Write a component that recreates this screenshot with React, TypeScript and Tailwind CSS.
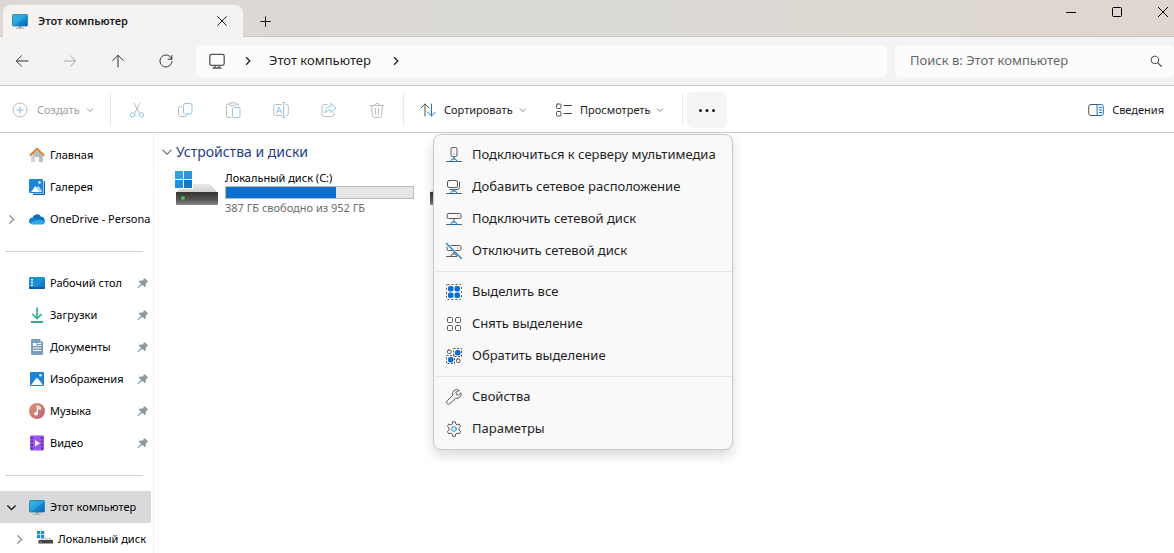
import React, { useState } from 'react';
import type { ReactNode } from 'react';

interface IconProps {
  className?: string;
}

interface NavEntry {
  id: string;
  label: string;
  icon: ReactNode;
  pinned?: boolean;
  expand?: 'open' | 'closed';
  selected?: boolean;
  nested?: boolean;
}

interface MenuEntry {
  label: string;
  icon: ReactNode;
}

function Stroke({ children, className = 'size-4' }: IconProps & { children: ReactNode }) {
  return (
    <svg
      viewBox="0 0 16 16"
      fill="none"
      stroke="currentColor"
      strokeLinecap="round"
      strokeLinejoin="round"
      className={`shrink-0 ${className}`}
      aria-hidden="true"
    >
      {children}
    </svg>
  );
}

function Chevron({ className }: IconProps) {
  return (
    <svg viewBox="0 0 8 8" fill="none" stroke="currentColor" className={`shrink-0 ${className}`} aria-hidden="true">
      <path d="M1 2.5l3 3 3-3" />
    </svg>
  );
}

function MonitorIcon() {
  return (
    <svg viewBox="0 0 16 16" className="size-4 shrink-0" aria-hidden="true">
      <defs>
        <linearGradient id="screen" x1="0" y1="0" x2="1" y2="1">
          <stop offset="0" stopColor="#37b6e0" />
          <stop offset="0.5" stopColor="#2ba3dc" />
          <stop offset="0.55" stopColor="#188fd4" />
          <stop offset="1" stopColor="#0a5cb8" />
        </linearGradient>
      </defs>
      <path d="M6.5 13h3v2h-3z" fill="#9aa7ad" />
      <path d="M4 14.7h8v1.1H4z" fill="#a9b2b7" />
      <rect x="0.5" y="1.5" width="15" height="11.5" rx="0.8" fill="url(#screen)" stroke="#1a7fa6" strokeWidth="0.8" />
    </svg>
  );
}

function HomeIcon() {
  return (
    <svg viewBox="0 0 16 16" className="size-4 shrink-0" aria-hidden="true">
      <path d="M2 7.5L8 2l6 5.5V15h-4v-5H6v5H2z" fill="#bdbdbd" />
      <path d="M2 8v7h4v-5l-2-3z" fill="#d2d2d2" />
      <path d="M0.8 8.6L8 1.6l7.2 7" fill="none" stroke="#db842e" strokeWidth="2" strokeLinejoin="round" />
    </svg>
  );
}

function GalleryIcon() {
  return (
    <svg viewBox="0 0 16 16" className="size-4 shrink-0" aria-hidden="true">
      <path d="M4 2h11a1 1 0 0 1 1 1v12a1 1 0 0 1-1 1H4z" fill="#0a5fb5" />
      <path d="M14.4 1.5v12.8H3" stroke="#e8f3fc" strokeWidth="0.8" fill="none" />
      <rect width="14" height="14" rx="1" fill="#1e86d8" />
      <path d="M2 13l4.5-6L11 13z" fill="#fff" />
      <path d="M8 8.5l1.5-1.5L13 12v1h-2z" fill="#b9dcf5" />
      <circle cx="10.5" cy="3.5" r="1.2" fill="#fff" />
    </svg>
  );
}

function CloudIcon() {
  return (
    <svg viewBox="0 0 16 16" className="size-4 shrink-0" aria-hidden="true">
      <path d="M3.5 7A4.6 4.6 0 0 1 12 5.7a3.9 3.9 0 0 1 3.8 4.3L8 12z" fill="#0f6cc4" />
      <path d="M3.6 6.4A3.6 3.6 0 0 0 1 12.5l8-3.5z" fill="#1482d6" />
      <path d="M1 12.4L9.5 8.5 16 10a2.8 2.8 0 0 1-2.8 3.5H3.6A3.6 3.6 0 0 1 1 12.4z" fill="#30a8e8" />
    </svg>
  );
}

function DesktopIcon() {
  return (
    <svg viewBox="0 0 16 16" className="size-4 shrink-0" aria-hidden="true">
      <rect y="2" width="16" height="12" rx="1" fill="#1b8fd6" />
      <path d="M0 12h16v1a1 1 0 0 1-1 1H1a1 1 0 0 1-1-1z" fill="#0d5ea8" />
      <path d="M2 4h2v1.5H2zM2 6.7h2v1.5H2zM2 9.4h2v1.5H2z" fill="#e5f5ff" />
      <path d="M16 4v8H8z" fill="#147dc8" />
    </svg>
  );
}

function DownloadIcon() {
  return (
    <svg viewBox="0 0 16 16" fill="none" stroke="#2fb58c" strokeWidth="1.7" className="size-4 shrink-0" aria-hidden="true">
      <path d="M8 0.5v10.8M3.3 7L8 11.6 12.7 7" />
      <path d="M2 15h12" stroke="#159c78" />
    </svg>
  );
}

function DocumentIcon() {
  return (
    <svg viewBox="0 0 16 16" className="size-4 shrink-0" aria-hidden="true">
      <path d="M2 1a1 1 0 0 1 1-1h8l3 3v12a1 1 0 0 1-1 1H3a1 1 0 0 1-1-1z" fill="#7c9ebd" />
      <path d="M11 0l3 3h-3z" fill="#c6d6e4" />
      <path d="M4 4h3.5v3H4z" fill="#fff" />
      <path d="M8.5 4.5H12M8.5 6.5H12M4 9h8M4 11.5h8" stroke="#fff" />
    </svg>
  );
}

function PicturesIcon() {
  return (
    <svg viewBox="0 0 16 16" className="size-4 shrink-0" aria-hidden="true">
      <rect x="1" y="1" width="14" height="14" rx="1" fill="#1b84d6" />
      <path d="M2 14l5-6.5c.6-.7 1.4-.7 2 0L14 14z" fill="#fff" />
      <circle cx="11.5" cy="4.2" r="1.2" fill="#fff" />
    </svg>
  );
}

function MusicIcon() {
  return (
    <svg viewBox="0 0 16 16" className="size-4 shrink-0" aria-hidden="true">
      <defs>
        <linearGradient id="music" x1="0" y1="0" x2="1" y2="1">
          <stop offset="0" stopColor="#e09468" />
          <stop offset="1" stopColor="#b9627e" />
        </linearGradient>
      </defs>
      <circle cx="8" cy="8" r="8" fill="url(#music)" />
      <ellipse cx="7" cy="10.8" rx="2" ry="1.7" fill="#fff" />
      <path d="M8.3 11V3.2l2.8 1v1.9L9.3 5.4" stroke="#fff" fill="none" strokeWidth="1.3" />
    </svg>
  );
}

function VideoIcon() {
  return (
    <svg viewBox="0 0 16 16" className="size-4 shrink-0" aria-hidden="true">
      <rect x="1" y="0.5" width="14" height="15" rx="1" fill="#9a55ea" />
      <path d="M3 2v12.5M13 2v12.5" stroke="#4f229b" strokeWidth="1.6" strokeDasharray="1.7 1.8" />
      <path d="M6 5v6.4l5.2-3.2z" fill="#f4ecfd" />
    </svg>
  );
}

function SmallDriveIcon() {
  return (
    <svg viewBox="0 0 16 16" className="size-4 shrink-0" aria-hidden="true">
      <path d="M4 6.5h9.5l2 3H3z" fill="#d9d9d9" />
      <path d="M1.5 9H16v3.5H1.5z" fill="#454545" />
      <path d="M3 11h1.4" stroke="#3cd45a" />
      <path d="M0 0h3.2v3.2H0zM4 0h3.2v3.2H4zM0 4h3.2v3.2H0zM4 4h3.2v3.2H4z" fill="#1f8ad4" />
    </svg>
  );
}

function DriveIcon({ system }: { system?: boolean }) {
  return (
    <svg viewBox="0 0 44 36" className="h-9 w-11 shrink-0" aria-hidden="true">
      <defs>
        <linearGradient id="drive-top" x1="0" y1="0" x2="0" y2="1">
          <stop offset="0" stopColor="#e9e9e9" />
          <stop offset="1" stopColor="#cfcfcf" />
        </linearGradient>
        <linearGradient id="drive-front" x1="0" y1="0" x2="0" y2="1">
          <stop offset="0" stopColor="#343434" />
          <stop offset="0.6" stopColor="#555" />
          <stop offset="1" stopColor="#888" />
        </linearGradient>
      </defs>
      <path d="M8 15h27l8 9H1z" fill="url(#drive-top)" />
      <path d="M1 23h42v12a1 1 0 0 1-1 1H2a1 1 0 0 1-1-1z" fill="url(#drive-front)" />
      <path d="M14 26h26" stroke="#1c1c1c" strokeDasharray="1 7" />
      <circle cx="8" cy="29" r="2" fill="#3cc24a" />
      {system && (
        <>
          <path d="M0 1h18v19H0z" fill="#fff" />
          <path d="M0 2h8v8H0z" fill="#2ea3e0" />
          <path d="M9 2h8v8H9z" fill="#2597da" />
          <path d="M0 11h8v8H0z" fill="#218fd8" />
          <path d="M9 11h8v8H9z" fill="#1479c9" />
        </>
      )}
    </svg>
  );
}

function PinIcon() {
  return (
    <svg viewBox="0 0 12 12" className="size-3 shrink-0 text-[#8e9aa1]" aria-hidden="true">
      <path d="M7.2 0.8l4 4-1.3.7-1.2 1.4.1 2.4-1 .9-2.5-2.5L1 11.2l-.6-.6L4 7 1.7 4.6l1-1 2.5.1 1.4-1.4z" fill="currentColor" />
    </svg>
  );
}

const toolbarActions: { label: string; icon: ReactNode }[] = [
  {
    label: 'Вырезать',
    icon: (
      <Stroke>
        <path d="M5 1l5.2 10M11 1L5.8 11" stroke="#bcbcbc" />
        <circle cx="3.6" cy="12.8" r="2.2" stroke="#8fc8ea" />
        <circle cx="12.4" cy="12.8" r="2.2" stroke="#8fc8ea" />
      </Stroke>
    )
  },
  {
    label: 'Копировать',
    icon: (
      <Stroke>
        <path d="M4.5 4.5H3.5a2 2 0 0 0-2 2v6a2 2 0 0 0 2 2H8a2 2 0 0 0 2-1.8" stroke="#bcbcbc" />
        <rect x="6.5" y="1.5" width="8.5" height="10.5" rx="1.8" stroke="#8fc8ea" />
      </Stroke>
    )
  },
  {
    label: 'Вставить',
    icon: (
      <Stroke>
        <path d="M6 15.5H3A1.5 1.5 0 0 1 1.5 14V3.5A1.5 1.5 0 0 1 3 2h1.500M11 2h1a1.500 1.500 0 0 1 1.500 1.500" stroke="#bcbcbc" />
        <rect x="4.5" y="0.8" width="6.5" height="2.7" rx="1.2" stroke="#bcbcbc" />
        <rect x="7.5" y="5.5" width="7.5" height="10" rx="1" stroke="#8fc8ea" />
      </Stroke>
    )
  },
  {
    label: 'Переименовать',
    icon: (
      <Stroke>
        <path
          d="M8.5 13.5H2.7a2 2 0 0 1-2-2v-7a2 2 0 0 1 2-2h5.8M13 2.5h.3a2 2 0 0 1 2 2v7a2 2 0 0 1-2 2H13"
          stroke="#bcbcbc"
        />
        <path d="M3.5 11L6 5l2.5 6M4.3 9.2h3.4M9.5.5h2.500M9.500 15.500H12M10.700.5v15" stroke="#8fc8ea" />
      </Stroke>
    )
  },
  {
    label: 'Поделиться',
    icon: (
      <Stroke>
        <path d="M6 2.5H3.5A2.5 2.5 0 0 0 1 5v7a2.5 2.5 0 0 0 2.5 2.5h7A2.5 2.5 0 0 0 13 12v-1" stroke="#bcbcbc" />
        <path d="M10 1.5L15 6l-5 4.5V8C7.5 8 5.5 9 4 11c.2-3.500 2.200-6.600 6-7z" stroke="#8fc8ea" />
      </Stroke>
    )
  },
  {
    label: 'Удалить',
    icon: (
      <Stroke>
        <path
          d="M1 3.5h14M2.5 3.5l1 10.3a1.8 1.8 0 0 0 1.8 1.7h5.4a1.8 1.8 0 0 0 1.8-1.7l1-10.3M5.8 3.5a2.2 2.2 0 0 1 4.4 0M6.5 6.5v5.500M9.500 6.500V12"
          stroke="#bcbcbc"
        />
      </Stroke>
    )
  }
];

const navGroups: NavEntry[][] = [
  [
    { id: 'home', label: 'Главная', icon: <HomeIcon /> },
    { id: 'gallery', label: 'Галерея', icon: <GalleryIcon /> },
    { id: 'onedrive', label: 'OneDrive - Persona', icon: <CloudIcon />, expand: 'closed' }
  ],
  [
    { id: 'desktop', label: 'Рабочий стол', icon: <DesktopIcon />, pinned: true },
    { id: 'downloads', label: 'Загрузки', icon: <DownloadIcon />, pinned: true },
    { id: 'documents', label: 'Документы', icon: <DocumentIcon />, pinned: true },
    { id: 'pictures', label: 'Изображения', icon: <PicturesIcon />, pinned: true },
    { id: 'music', label: 'Музыка', icon: <MusicIcon />, pinned: true },
    { id: 'video', label: 'Видео', icon: <VideoIcon />, pinned: true }
  ],
  [
    { id: 'computer', label: 'Этот компьютер', icon: <MonitorIcon />, expand: 'open', selected: true },
    { id: 'drive-c', label: 'Локальный диск', icon: <SmallDriveIcon />, expand: 'closed', nested: true }
  ]
];

const menuGroups: MenuEntry[][] = [
  [
    {
      label: 'Подключиться к серверу мультимедиа',
      icon: (
        <Stroke>
          <rect x="5" y="0.5" width="6" height="9" rx="1.5" />
          <path d="M8 9.500V12M8 7v.2M.5 14.500h4M11.500 14.500h4" />
          <path d="M6.5 12h3l1.500 2.500H5z" stroke="#0078d4" />
        </Stroke>
      )
    },
    {
      label: 'Добавить сетевое расположение',
      icon: (
        <Stroke>
          <rect x="1.5" y="1.5" width="10" height="7" rx="1.5" />
          <path d="M13.5 3v5a2.500 2.500 0 0 1-2.500 2.500H4M8 10.500V12M.5 14.500h4M11.500 14.500h4" />
          <path d="M6.5 12h3l1.500 2.500H5z" stroke="#0078d4" />
        </Stroke>
      )
    },
    {
      label: 'Подключить сетевой диск',
      icon: (
        <Stroke>
          <rect x="1" y="2.5" width="14" height="5" rx="1.5" />
          <path d="M12 4.900v.2M8 7.500V11M.5 13.500h4M11.500 13.500h4" />
          <path d="M6.5 11h3l1.500 2.500H5z" stroke="#0078d4" />
        </Stroke>
      )
    },
    {
      label: 'Отключить сетевой диск',
      icon: (
        <Stroke>
          <path d="M5 2.5h8.500A1.500 1.500 0 0 1 15 4v2a1.500 1.500 0 0 1-1.500 1.500H10M6 7.500H2.500A1.500 1.500 0 0 1 1 6V4" />
          <path d="M12 4.900v.2M8 9.500V11M.5 13.500h4M6.500 11h3l1.500 2.500H5z" />
          <path d="M0.5 0.5l15 15" stroke="#0078d4" strokeWidth="1.2" />
        </Stroke>
      )
    }
  ],
  [
    {
      label: 'Выделить все',
      icon: (
        <Stroke>
          <rect x="0.5" y="0.5" width="15" height="15" rx="1" strokeDasharray="2 2" strokeLinecap="butt" />
          <g fill="#0f6fcf" stroke="none">
            <rect x="2" y="2" width="5.5" height="5.5" rx="1.8" />
            <rect x="8.5" y="2" width="5.5" height="5.5" rx="1.8" />
            <rect x="2" y="8.5" width="5.5" height="5.5" rx="1.8" />
            <rect x="8.5" y="8.5" width="5.5" height="5.5" rx="1.8" />
          </g>
        </Stroke>
      )
    },
    {
      label: 'Снять выделение',
      icon: (
        <Stroke>
          <rect x="1.5" y="1.5" width="5" height="5" rx="1" />
          <rect x="9.5" y="1.5" width="5" height="5" rx="1" />
          <rect x="1.5" y="9.5" width="5" height="5" rx="1" />
          <rect x="9.5" y="9.5" width="5" height="5" rx="1" />
        </Stroke>
      )
    },
    {
      label: 'Обратить выделение',
      icon: (
        <Stroke>
          <rect x="1.5" y="2" width="3.5" height="3.5" rx="1" />
          <rect x="10.5" y="11" width="3.5" height="3.5" rx="1" />
          <path d="M7.5 0.5h8v8h-8zM0.5 7.5h8v8h-8z" strokeDasharray="2 1.5" strokeLinecap="butt" />
          <rect x="9" y="2" width="5.5" height="5.5" rx="2" fill="#0f6fcf" stroke="none" />
          <rect x="2" y="9" width="5.5" height="5.5" rx="2" fill="#0f6fcf" stroke="none" />
        </Stroke>
      )
    }
  ],
  [
    {
      label: 'Свойства',
      icon: (
        <Stroke>
          <path d="M13 1.2a4.2 4.2 0 0 0-6.2 5L1.2 11.7a1.9 1.9 0 0 0 2.8 2.9l5.700-5.500a4.200 4.200 0 0 0 5.300-5.400l-2.500 2.400-2-.5-.5-2z" />
        </Stroke>
      )
    },
    {
      label: 'Параметры',
      icon: (
        <Stroke>
          <path d="M6.7.8h2.600l.5 2.200 1.300.8 2.200-.7 1.300 2.300-1.600 1.600v1.900l1.600 1.600-1.300 2.300-2.200-.7-1.300.8-.5 2.300H6.700l-.5-2.300-1.300-.8-2.200.7-1.300-2.300L3 8.900V7L1.400 5.400l1.300-2.300 2.200.7L6.200 3z" />
          <circle cx="8" cy="8" r="2.3" stroke="#1d8fe0" />
        </Stroke>
      )
    }
  ]
];

function TitleBar() {
  return (
    <header className="flex h-[37px] items-end justify-between border-b border-[#c9c8c4] bg-linear-to-r from-[#ddd8d3] via-[#dbdad6] to-[#dfd7cf] pl-[3px]">
      <div className="-mb-px flex items-center">
        <div className="flex h-8 w-60 items-center rounded-t-lg bg-[#f4f3f2] pr-[11px] pl-[9px]">
          <MonitorIcon />
          <span className="flex-1 pl-[10px] text-[11px] font-semibold">Этот компьютер</span>
          <button type="button" aria-label="Закрыть вкладку" className="flex size-5 items-center justify-center">
            <Stroke className="size-[10px]">
              <path d="M1 1l14 14M15 1L1 15" strokeWidth="1.6" />
            </Stroke>
          </button>
        </div>
        <button type="button" aria-label="Новая вкладка" className="ml-2 flex size-7 items-center justify-center">
          <Stroke className="size-[11px]">
            <path d="M8 1v14M1 8h14" strokeWidth="1.5" />
          </Stroke>
        </button>
      </div>
      <div className="flex self-start text-black">
        <button type="button" aria-label="Свернуть" className="flex h-6 w-[46px] items-center justify-center">
          <svg viewBox="0 0 10 10" className="size-[10px]" stroke="currentColor">
            <path d="M0 5.5h10" />
          </svg>
        </button>
        <button type="button" aria-label="Развернуть" className="flex h-6 w-[46px] items-center justify-center">
          <svg viewBox="0 0 10 10" className="size-[10px]" fill="none" stroke="currentColor">
            <rect x="0.5" y="0.5" width="9" height="9" rx="1" />
          </svg>
        </button>
        <button type="button" aria-label="Закрыть" className="flex h-6 w-[34px] items-center justify-end pr-[6px]">
          <svg viewBox="0 0 10 10" className="size-[10px]" stroke="currentColor">
            <path d="M0 0l10 10M10 0L0 10" />
          </svg>
        </button>
      </div>
    </header>
  );
}

function AddressBar() {
  return (
    <div className="flex gap-3 border-b border-[#cbcac6] bg-[#f4f3f2] py-2 pl-1">
      <nav className="flex items-center gap-3 text-[#333]" aria-label="Переходы">
        <button type="button" aria-label="Назад" className="flex w-9 justify-center">
          <Stroke>
            <path d="M14 8H2.5M7.5 2.8L2.2 8l5.3 5.2" />
          </Stroke>
        </button>
        <button type="button" aria-label="Вперед" disabled className="flex w-9 justify-center text-[#a5a5a5]">
          <Stroke>
            <path d="M2 8h11.5M8.5 2.8L13.8 8l-5.3 5.2" />
          </Stroke>
        </button>
        <button type="button" aria-label="Вверх" className="flex w-9 justify-center">
          <Stroke>
            <path d="M8 14V2.5M2.8 7.5L8 2.2l5.2 5.3" />
          </Stroke>
        </button>
        <button type="button" aria-label="Обновить" className="flex w-9 justify-center">
          <Stroke>
            <path d="M13.7 6A6 6 0 1 0 14 8.5M13.8 2.5v3.7h-3.7" />
          </Stroke>
        </button>
      </nav>
      <div className="flex min-w-0 flex-1 gap-2">
        <div className="flex h-8 min-w-0 flex-1 items-center rounded-md bg-[#fcfcfc] pl-[13px] text-[#222]">
          <svg viewBox="0 0 16 16" className="size-4 shrink-0" fill="none" stroke="#555" strokeWidth="1.3" aria-hidden="true">
            <rect x="0.8" y="1.3" width="14.4" height="11" rx="1.8" />
            <path d="M6 12.5v2M10 12.5v2M3.5 15h9" />
          </svg>
          <Chevron className="ml-[18px] size-[10px] -rotate-90" />
          <button type="button" className="mr-5 ml-4 text-[13px]">
            Этот компьютер
          </button>
          <Chevron className="size-[10px] -rotate-90" />
        </div>
        <label className="flex h-8 w-[279px] items-center rounded-md bg-[#fcfcfc] pr-3 pl-[15px]">
          <input
            type="search"
            aria-label="Поиск"
            placeholder="Поиск в: Этот компьютер"
            className="min-w-0 flex-1 bg-transparent text-[13px] outline-none placeholder:text-[#676767]"
          />
          <Stroke className="size-3 text-[#444]">
            <circle cx="6.5" cy="6.5" r="5" strokeWidth="1.3" />
            <path d="M10.2 10.2l5 5" strokeWidth="1.6" />
          </Stroke>
        </label>
      </div>
    </div>
  );
}

function MoreMenu() {
  return (
    <div
      role="menu"
      className="absolute top-full -right-[6px] z-10 mt-[6px] w-[300px] rounded-lg border border-[#c8c8c8] bg-[#f9f9f9] py-1 shadow-[0_6px_12px_rgba(0,0,0,0.14)]"
    >
      {menuGroups.map((group, index) => (
        <div key={index} role="group" className="border-[#e6e6e6] not-first:mt-1 not-first:border-t not-first:pt-1">
          {group.map((item) => (
            <button
              key={item.label}
              type="button"
              role="menuitem"
              className="flex h-8 w-full items-center gap-[10px] pl-3 text-[13px] whitespace-nowrap text-[#1f1f1f]"
            >
              <span className="text-[#5a5a5a]">{item.icon}</span>
              {item.label}
            </button>
          ))}
        </div>
      ))}
    </div>
  );
}

function Toolbar() {
  const [menuOpen, setMenuOpen] = useState(true);

  return (
    <div role="toolbar" className="flex h-[47px] items-center border-b border-[#cbcac6] bg-white pt-[2px] text-[11px]">
      <button type="button" disabled className="flex h-8 w-[110px] items-center pl-3 text-[#a0a0a0]">
        <Stroke>
          <circle cx="8" cy="8" r="7" stroke="#bcbcbc" />
          <path d="M8 5v6M5 8h6" stroke="#7cc0ea" />
        </Stroke>
        <span className="pl-[9px]">Создать</span>
        <Chevron className="ml-[6px] size-2" />
      </button>
      <div className="h-8 w-px bg-[#e9e9e9]" />
      <div className="flex px-[2px]">
        {toolbarActions.map((action) => (
          <button key={action.label} type="button" disabled aria-label={action.label} className="flex h-8 w-12 items-center justify-center">
            {action.icon}
          </button>
        ))}
      </div>
      <div className="h-8 w-px bg-[#e9e9e9]" />
      <button type="button" className="flex h-8 w-[136px] items-center pl-4">
        <Stroke>
          <path d="M5 14V2M1 6l4-4 4 4" stroke="#555" />
          <path d="M11.5 2v12M7.5 10l4 4 4-4" stroke="#0f78d4" />
        </Stroke>
        <span className="pl-2">Сортировать</span>
        <Chevron className="ml-[6px] size-2 text-[#888]" />
      </button>
      <button type="button" className="flex h-8 w-[142px] items-center pl-4">
        <Stroke>
          <rect x="0.5" y="2" width="4.5" height="4.5" rx="1" stroke="#555" />
          <rect x="0.5" y="9.5" width="4.5" height="4.5" rx="1" stroke="#555" />
          <path d="M8 3.5h7.5M8 11.5h7.5" stroke="#444" />
        </Stroke>
        <span className="pl-2">Просмотреть</span>
        <Chevron className="ml-[6px] size-2 text-[#888]" />
      </button>
      <div className="h-8 w-px bg-[#e9e9e9]" />
      <div className="relative ml-1">
        <button
          type="button"
          aria-label="Подробнее"
          aria-expanded={menuOpen}
          onClick={() => setMenuOpen(!menuOpen)}
          className="flex h-9 w-10 items-center justify-center rounded-md bg-[#f5f5f5]"
        >
          <svg viewBox="0 0 16 16" className="size-4" fill="#1a1a1a" aria-hidden="true">
            <circle cx="1.5" cy="8.5" r="1.5" />
            <circle cx="8" cy="8.5" r="1.5" />
            <circle cx="14.5" cy="8.5" r="1.5" />
          </svg>
        </button>
        {menuOpen && <MoreMenu />}
      </div>
      <button type="button" className="mr-[10px] ml-auto flex items-center gap-2">
        <Stroke>
          <path d="M9 2.5H3a2.3 2.3 0 0 0-2.3 2.3v6.4A2.3 2.3 0 0 0 3 13.5h6" stroke="#555" />
          <path d="M9.5 2.5H13a2.3 2.3 0 0 1 2.3 2.3v6.4a2.3 2.3 0 0 1-2.3 2.3H9.5zM11.5 5.5h2M11.5 8h2M11.5 10.5h2" stroke="#0f78d4" />
        </Stroke>
        Сведения
      </button>
    </div>
  );
}

function NavRow({ item }: { item: NavEntry }) {
  return (
    <a
      href={`#${item.id}`}
      aria-current={item.selected ? 'page' : undefined}
      className={`flex h-8 items-center rounded-r-xs text-[11px] text-black ${item.selected ? 'bg-[#d9d9d9]' : ''} ${item.nested ? 'pl-[14px]' : 'pl-[6px]'}`}
    >
      <span className="flex w-[23px] shrink-0">
        {item.expand === 'open' && <Chevron className="size-[11px] text-[#222]" />}
        {item.expand === 'closed' && <Chevron className="size-[11px] -rotate-90 text-[#888]" />}
      </span>
      {item.icon}
      <span className="min-w-0 flex-1 pl-[5px] whitespace-nowrap">{item.label}</span>
      {item.pinned && (
        <span className="pr-[2px]">
          <PinIcon />
        </span>
      )}
    </a>
  );
}

function Sidebar() {
  return (
    <aside className="w-[154px] shrink-0 border-r border-[#f2f2f2] pt-[6px] pr-[2px]">
      {navGroups.map((group, index) => (
        <div key={index}>
          {index > 0 && (
            <div className="flex h-8 items-center pr-2 pl-[5px]">
              <hr className="flex-1 border-[#d4d4d4]" />
            </div>
          )}
          {group.map((item) => (
            <NavRow key={item.id} item={item} />
          ))}
        </div>
      ))}
    </aside>
  );
}

function DriveList() {
  return (
    <main className="flex-1 pt-[9px] pl-[7px]">
      <h2 className="flex items-center gap-[3px] text-sm text-[#1d4289]">
        <Chevron className="size-3 text-[#888]" />
        Устройства и диски
      </h2>
      <div className="flex gap-[15px] pt-[7px] pl-[14px]">
        <div className="flex w-[239px] gap-[6px]">
          <DriveIcon system />
          <div className="flex-1 text-[11px]">
            <p className="leading-[17px] text-black">Локальный диск (C:)</p>
            <div role="progressbar" aria-label="Занято на диске C" aria-valuenow={59} className="h-[13px] border border-[#bcbcbc] bg-[#e6e6e6]">
              <div className="h-full bg-[#0a6fce]" style={{ width: '59%' }} />
            </div>
            <p className="leading-[18px] text-[#6d6d6d]">387 ГБ свободно из 952 ГБ</p>
          </div>
        </div>
        <DriveIcon />
      </div>
    </main>
  );
}

export default function App() {
  return (
    <div className="flex h-screen flex-col overflow-hidden bg-white font-['Noto_Sans','Open_Sans',sans-serif] text-[#1a1a1a]">
      <TitleBar />
      <AddressBar />
      <Toolbar />
      <div className="flex min-h-0 flex-1">
        <Sidebar />
        <DriveList />
      </div>
    </div>
  );
}
